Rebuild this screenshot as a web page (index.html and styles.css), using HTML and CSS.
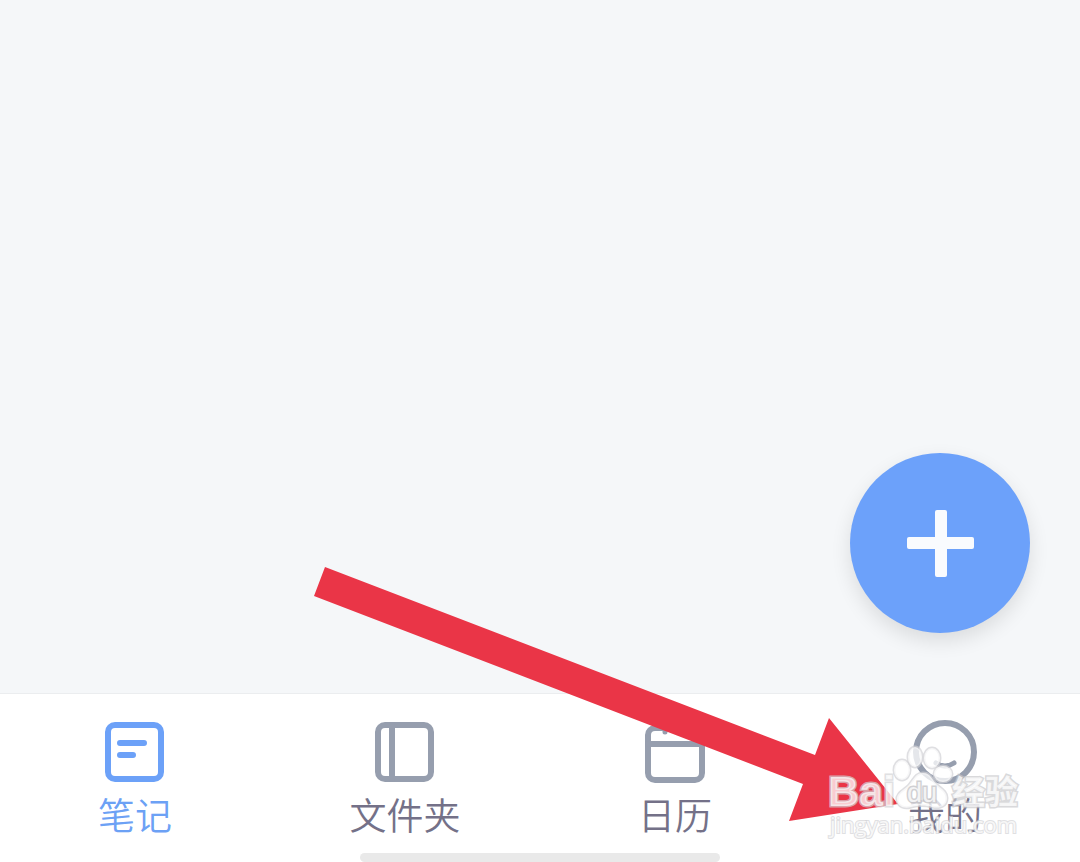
FILE: index.html
```html
<!DOCTYPE html>
<html lang="zh-CN">
<head>
<meta charset="utf-8">
<meta name="viewport" content="width=device-width, initial-scale=1">
<title>笔记</title>
<link rel="stylesheet" href="styles.css">
</head>
<body>

<div class="app">

<main class="notes">
<button type="button" class="add_btn" aria-label="新建笔记">
<svg width="68" height="68" viewBox="0 0 68 68"><rect x="1" y="28" width="67" height="12" rx="2"/><rect x="29" y="1" width="12" height="67" rx="2"/></svg>
</button>
</main>

<nav class="tabs">
<a href="#notes" class="tab tab_on">
<svg class="tab_icon" viewBox="0 0 64 64"><rect x="5" y="5" width="53" height="54" rx="7"/><path d="M17 23h24M17 35h13"/></svg>
<span>笔记</span>
</a>
<a href="#folders" class="tab">
<svg class="tab_icon" viewBox="0 0 64 64"><rect x="5" y="5" width="53" height="54" rx="7"/><path d="M19 5v54"/></svg>
<span>文件夹</span>
</a>
<a href="#calendar" class="tab">
<svg class="tab_icon" viewBox="0 0 64 64"><rect x="5" y="8" width="54" height="52" rx="7"/><path d="M5 24h54"/><path class="thin" d="M22 4v8M42 4v8"/></svg>
<span>日历</span>
</a>
<a href="#me" class="tab">
<svg class="tab_icon" viewBox="0 0 64 64"><circle cx="32" cy="32" r="29"/><path class="thin" d="M23 43q9 6 18 0"/></svg>
<span>我的</span>
</a>
</nav>

<div class="home_bar"></div>

<svg class="arrow" width="584" height="254" viewBox="0 0 584 254" aria-hidden="true"><polygon points="11,0 501,188 515,151 584,237 475,254 489,217 0,29"/></svg>

<svg class="mark" width="204" height="100" viewBox="0 0 204 100">
<g class="mark_shape">
<ellipse cx="80" cy="28" rx="8" ry="10"/>
<ellipse cx="93" cy="15" rx="7" ry="10"/>
<ellipse cx="110" cy="16" rx="8" ry="10"/>
<ellipse cx="121" cy="32" rx="9" ry="8"/>
<path d="M101 31c-8 0-10 8-15 13-6 5-12 8-11 14 1 7 8 9 14 7 8-2 14-2 21 0 8 2 15-1 15-9 0-6-5-9-10-13-5-5-6-12-14-12z"/>
</g>
<text class="mark_name" x="6" y="64">Bai</text>
<text class="mark_du" x="85" y="60">du</text>
<text class="mark_cn" x="130" y="62">经验</text>
<text class="mark_url" x="8" y="91">jingyan.baidu.com</text>
</svg>

</div>

</body>
</html>
```

FILE: styles.css
```css
body {margin:0;background:#f5f7f9;font-family:"Noto Sans CJK SC",sans-serif;}

.app {position:relative;display:flex;flex-direction:column;min-height:100vh;overflow:hidden;background:linear-gradient(#fff,#fff) bottom/100% 9px no-repeat;}

.notes {flex:1;display:flex;justify-content:flex-end;align-items:flex-end;padding:0 50px 60px;}

.add_btn {display:flex;align-items:center;justify-content:center;width:180px;height:180px;padding:0;border:0;border-radius:50%;background:#6ca1fa;box-shadow:0 8px 20px rgba(0,0,0,.11);cursor:pointer;}
.add_btn svg {fill:#f9fbfe;}

.tabs {display:flex;padding:26px 0 11px;border-top:1px solid #ebedef;background:#fff;}
.tab {flex:1;display:flex;flex-direction:column;align-items:center;color:#747188;font-size:37px;font-weight:350;line-height:56px;text-decoration:none;}
.tab_icon {width:64px;height:64px;margin-bottom:2px;fill:none;stroke:#969eae;stroke-width:6;stroke-linecap:round;}
.tab_icon .thin {stroke-width:5;}
.tab_on {color:#6ca1f5;}
.tab_on .tab_icon {stroke:#6ca1f8;}

.home_bar {width:360px;height:9px;margin:0 auto;border-radius:5px;background:#e9e9e9;}

/* pointer to the last tab */
.arrow {position:absolute;right:182px;bottom:41px;fill:#ea3547;pointer-events:none;}

.mark {position:absolute;right:54px;bottom:20px;pointer-events:none;fill:#fff;fill-opacity:.75;stroke:#d2d2d5;stroke-opacity:.7;paint-order:stroke;}
.mark_shape {stroke-width:3;}
.mark_name {font:bold 43px "Liberation Sans",sans-serif;stroke-width:3;}
.mark_du {font:27px "Liberation Sans",sans-serif;stroke:#bcbcc0;stroke-width:3;}
.mark_cn {font:bold 33px "Noto Sans CJK SC",sans-serif;stroke:#c8c8cc;stroke-width:3;}
.mark_url {font:500 22px "Open Sans",sans-serif;stroke-width:2;}
```
